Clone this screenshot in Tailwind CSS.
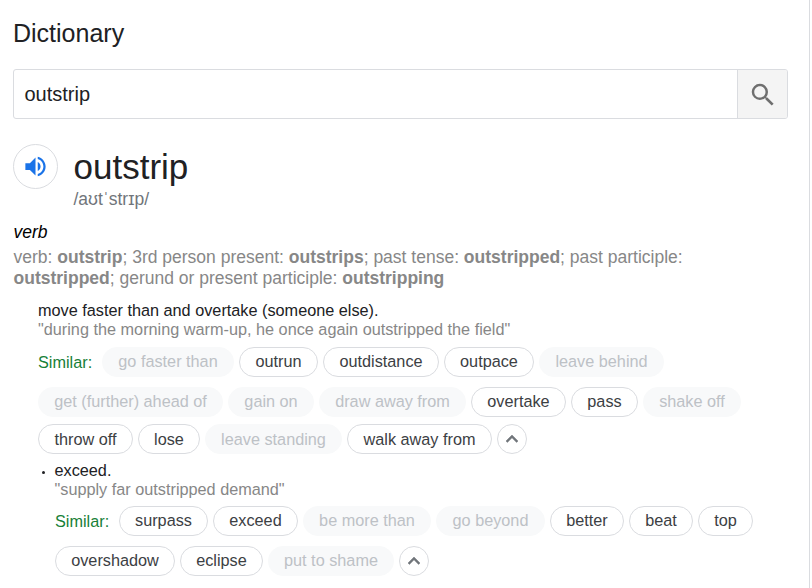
<!DOCTYPE html>
<html lang="en">
<head>
<meta charset="utf-8">
<title>Dictionary</title>
<script src="https://cdn.jsdelivr.net/npm/@tailwindcss/browser@4"></script>
</head>
<body class="bg-white">
<main class="w-[810px] h-[588px] overflow-hidden border-r border-[#dadce0] pl-[13px] pr-[21px] text-[#202124] font-['Liberation_Sans',Arial,sans-serif]">
  <h1 class="pt-[18px] h-[69px] text-[25px] leading-[30px]">Dictionary</h1>
  <form class="flex h-[50px] border border-[#dadce0] rounded-[3px] overflow-hidden">
    <div class="flex-1 pl-[10.5px] text-[20px] leading-[48px]">outstrip</div>
    <button type="button" aria-label="Search" class="w-[50px] border-l border-[#dadce0] bg-[#f4f4f4] flex items-center justify-center pt-[2px]">
      <svg class="w-[30px] h-[30px]" viewBox="0 0 24 24"><path fill="#6f6f6f" d="M15.5 14h-.79l-.28-.27A6.471 6.471 0 0 0 16 9.5 6.5 6.5 0 1 0 9.5 16c1.61 0 3.09-.59 4.23-1.57l.27.28v.79l5 4.99L20.49 19l-4.99-5zm-6 0C7.01 14 5 11.99 5 9.5S7.01 5 9.5 5 14 7.01 14 9.5 11.99 14 9.5 14z"/></svg>
    </button>
  </form>
  <header class="flex mt-[25px] h-[76px]">
    <button type="button" aria-label="Listen" class="w-[45px] h-[45px] rounded-full border border-[#dadce0] flex items-center justify-center">
      <svg class="w-[27px] h-[27px]" viewBox="0 0 24 24" fill="#1a73e8"><path d="M3 9v6h4l5 5V4L7 9H3zm13.5 3c0-1.77-1.02-3.29-2.5-4.03v8.05c1.48-.73 2.5-2.25 2.5-4.02zM14 3.23v2.06c2.89.86 5 3.54 5 6.71s-2.11 5.85-5 6.71v2.06c4.01-.91 7-4.49 7-8.77s-2.99-7.86-7-8.77z"/></svg>
    </button>
    <div class="ml-[15.5px] pt-[3px]">
      <div class="text-[35px] leading-[40px]">outstrip</div>
      <div class="pt-px text-[17.5px] leading-[22px] text-[#70757a]">/aʊtˈstrɪp/</div>
    </div>
  </header>
  <div class="pl-[0.5px] text-[17.5px] leading-[24px] italic text-black">verb</div>
  <p class="mt-[3px] pl-[0.5px] text-[17.5px] leading-[21px] text-[#878787]">verb: <b>outstrip</b>; 3rd person present: <b>outstrips</b>; past tense: <b>outstripped</b>; past participle:<br><b>outstripped</b>; gerund or present participle: <b>outstripping</b></p>

  <section class="pl-[25px] mt-[12px] text-[16.25px] leading-[19px]">
    <div>move faster than and overtake (someone else).</div>
    <div class="text-[#878787]">"during the morning warm-up, he once again outstripped the field"</div>
    <div class="flex gap-[5px] mt-[8px] leading-[26px] text-center text-[#3c4043] whitespace-nowrap">
      <span class="w-[59px] text-left text-[#188038] pt-[2px]">Similar:</span>
      <span class="w-[132px] h-[30px] rounded-full border border-[#f8f9fa] bg-[#f8f9fa] text-[#bdc1c6]">go faster than</span>
      <span class="w-[79px] h-[30px] rounded-full border border-[#dadce0]">outrun</span>
      <span class="w-[116px] h-[30px] rounded-full border border-[#dadce0]">outdistance</span>
      <span class="w-[90px] h-[30px] rounded-full border border-[#dadce0]">outpace</span>
      <span class="w-[125px] h-[30px] rounded-full border border-[#f8f9fa] bg-[#f8f9fa] text-[#bdc1c6]">leave behind</span>
    </div>
    <div class="flex gap-[5px] mt-[10px] leading-[26px] text-center text-[#3c4043] whitespace-nowrap">
      <span class="w-[185px] h-[30px] rounded-full border border-[#f8f9fa] bg-[#f8f9fa] text-[#bdc1c6]">get (further) ahead of</span>
      <span class="w-[86px] h-[30px] rounded-full border border-[#f8f9fa] bg-[#f8f9fa] text-[#bdc1c6]">gain on</span>
      <span class="w-[147px] h-[30px] rounded-full border border-[#f8f9fa] bg-[#f8f9fa] text-[#bdc1c6]">draw away from</span>
      <span class="w-[95px] h-[30px] rounded-full border border-[#dadce0]">overtake</span>
      <span class="w-[67px] h-[30px] rounded-full border border-[#dadce0]">pass</span>
      <span class="w-[98px] h-[30px] rounded-full border border-[#f8f9fa] bg-[#f8f9fa] text-[#bdc1c6]">shake off</span>
    </div>
    <div class="flex gap-[5px] mt-[7px] leading-[29px] text-center text-[#3c4043] whitespace-nowrap">
      <span class="w-[95px] h-[30px] rounded-full border border-[#dadce0]">throw off</span>
      <span class="w-[62px] h-[30px] rounded-full border border-[#dadce0]">lose</span>
      <span class="w-[137px] h-[30px] rounded-full border border-[#f8f9fa] bg-[#f8f9fa] text-[#bdc1c6]">leave standing</span>
      <span class="w-[145px] h-[30px] rounded-full border border-[#dadce0]">walk away from</span>
      <span class="w-[30px] h-[30px] rounded-full border border-[#dadce0] flex items-center justify-center"><svg class="w-6 h-6 shrink-0" viewBox="0 0 24 24" fill="#70757a"><path d="M12 8l-6 6 1.41 1.41L12 10.83l4.59 4.58L18 14z" stroke="#70757a" stroke-width=".5"/></svg></span>
    </div>
  </section>

  <section class="mt-[7px] ml-[29px] flex text-[16.25px] leading-[19px]">
    <div class="w-[12.5px] pt-[10px]"><div class="w-[3px] h-[3px] rounded-full bg-[#202124]"></div></div>
    <div>
      <div>exceed.</div>
      <div class="text-[#878787]">"supply far outstripped demand"</div>
      <div class="flex gap-[5px] mt-[7px] pl-[0.5px] leading-[26px] text-center text-[#3c4043] whitespace-nowrap">
        <span class="w-[59px] text-left text-[#188038] pt-[2px]">Similar:</span>
        <span class="w-[89px] h-[30px] rounded-full border border-[#dadce0]">surpass</span>
        <span class="w-[85px] h-[30px] rounded-full border border-[#dadce0]">exceed</span>
        <span class="w-[128px] h-[30px] rounded-full border border-[#f8f9fa] bg-[#f8f9fa] text-[#bdc1c6]">be more than</span>
        <span class="w-[109px] h-[30px] rounded-full border border-[#f8f9fa] bg-[#f8f9fa] text-[#bdc1c6]">go beyond</span>
        <span class="w-[74px] h-[30px] rounded-full border border-[#dadce0]">better</span>
        <span class="w-[64px] h-[30px] rounded-full border border-[#dadce0]">beat</span>
        <span class="w-[55px] h-[30px] rounded-full border border-[#dadce0]">top</span>
      </div>
      <div class="flex gap-[5px] mt-[10px] pl-[0.5px] leading-[26px] text-center text-[#3c4043] whitespace-nowrap">
        <span class="w-[120px] h-[30px] rounded-full border border-[#dadce0]">overshadow</span>
        <span class="w-[83px] h-[30px] rounded-full border border-[#dadce0]">eclipse</span>
        <span class="w-[126px] h-[30px] rounded-full border border-[#f8f9fa] bg-[#f8f9fa] text-[#bdc1c6]">put to shame</span>
        <span class="w-[30px] h-[30px] rounded-full border border-[#dadce0] flex items-center justify-center"><svg class="w-6 h-6 shrink-0" viewBox="0 0 24 24" fill="#70757a"><path d="M12 8l-6 6 1.41 1.41L12 10.83l4.59 4.58L18 14z" stroke="#70757a" stroke-width=".5"/></svg></span>
      </div>
    </div>
  </section>
</main>
</body>
</html>
